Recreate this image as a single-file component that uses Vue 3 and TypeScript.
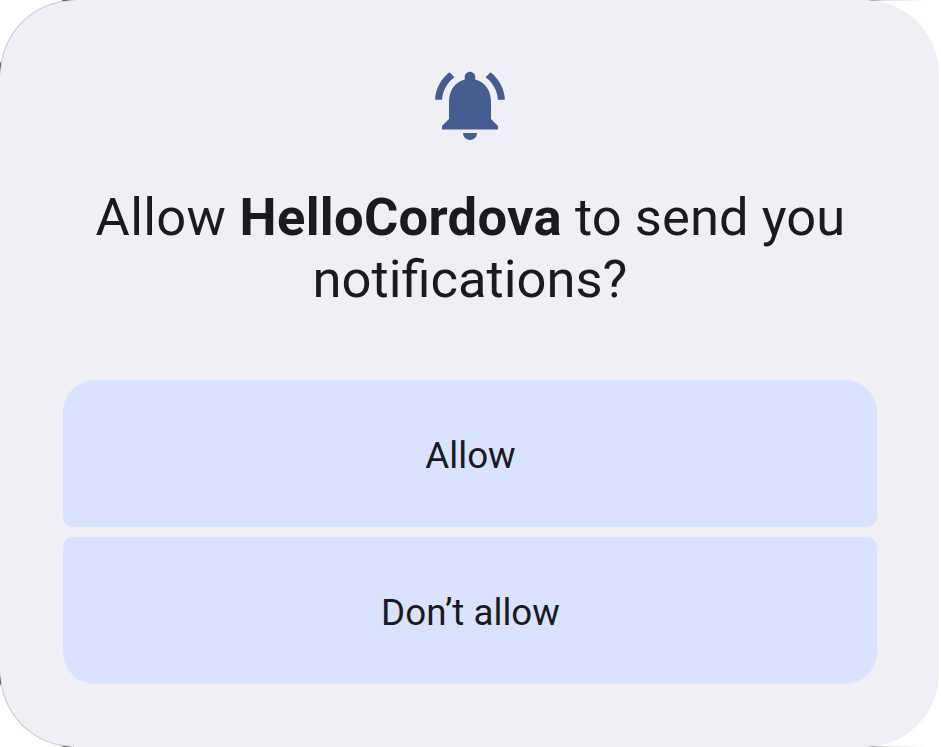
<script setup lang="ts">
interface Choice {
  id: string
  label: string
}

const appName: string = 'HelloCordova'
const choices: Choice[] = [
  { id: 'allow', label: 'Allow' },
  { id: 'deny', label: 'Don’t allow' },
]
</script>

<template>
  <main class="screen">
    <section class="dialog" role="dialog" aria-labelledby="permission-title">
      <svg class="bell" viewBox="0 0 24 24" aria-hidden="true">
        <path d="M7.58 4.08L6.15 2.65C3.75 4.48 2.17 7.3 2.03 10.5h2c.15-2.65 1.51-4.97 3.55-6.42z" />
        <path d="M19.97 10.5h2c-.15-3.2-1.73-6.02-4.12-7.85l-1.42 1.43c2.02 1.45 3.39 3.77 3.54 6.42z" />
        <path d="M18 11c0-3.07-1.64-5.64-4.5-6.32V4c0-.83-.67-1.5-1.5-1.5s-1.5.67-1.5 1.5v.68C7.63 5.36 6 7.92 6 11v5l-2 2v1h16v-1l-2-2z" />
        <path d="M10 20a2 2 0 0 0 4 0z" />
      </svg>
      <h1 id="permission-title" class="title">
        <span class="line spaced">
          <span>Allow&nbsp;</span><strong>{{ appName }}</strong><span class="tail">&nbsp;to send you</span>
        </span>
        <span class="line">notifications?</span>
      </h1>
      <div class="actions">
        <button v-for="choice in choices" :key="choice.id" class="action" type="button">
          {{ choice.label }}
        </button>
      </div>
    </section>
    <i class="fringe fringe-top"></i>
    <i class="fringe fringe-bottom"></i>
    <i class="edge side upper"></i>
    <i class="edge side lower"></i>
    <i class="edge cap top left"></i>
    <i class="edge cap bottom left"></i>
    <i class="edge cap top right"></i>
    <i class="edge cap bottom right"></i>
  </main>
</template>

<style>
body {
  background: #fff;
}
</style>

<style scoped>
.screen {
  position: relative;
  width: 941px;
  height: 747px;
  overflow: hidden;
  background: #fff;
}

.dialog {
  box-sizing: border-box;
  display: flex;
  flex-direction: column;
  align-items: center;
  width: 939px;
  height: 747px;
  padding: 63px 62px 63px 63px;
  border-radius: 74px;
  background: #f0eff6;
  color: #1a1b20;
  font-family: Roboto, sans-serif;
}

.bell {
  flex: none;
  width: 84px;
  height: 84px;
  fill: #475d92;
}

.title {
  width: 814px;
  margin: 39px 0 0;
  font-size: 52.5px;
  font-weight: 400;
  line-height: 62px;
  text-align: center;
}

.line {
  display: flex;
  justify-content: center;
  height: 62px;
}

.spaced {
  padding-left: 1px;
  letter-spacing: 0.3px;
}

.title strong {
  font-weight: 700;
}

.tail {
  letter-spacing: 0.08px;
}

.actions {
  display: flex;
  flex-direction: column;
  gap: 10px;
  width: 814px;
  margin-top: 70px;
}

.action {
  height: 147px;
  margin: 0;
  padding: 4px 0 0 1px;
  border: 0;
  border-radius: 10px;
  background: #d9e2ff;
  color: #1a1b20;
  font-family: inherit;
  font-size: 36.75px;
  font-weight: 400;
  line-height: 43px;
  text-align: center;
}

.action:first-child {
  border-top-left-radius: 32px;
  border-top-right-radius: 32px;
}

.action:last-child {
  border-bottom-right-radius: 32px;
  border-bottom-left-radius: 32px;
}

.fringe {
  position: absolute;
  left: 0;
  box-sizing: border-box;
  width: 74px;
  height: 74px;
  border: 0 solid rgba(0, 0, 0, 0.16);
  border-left-width: 1px;
}

.fringe-top {
  top: 0;
  border-top-width: 1px;
  border-top-left-radius: 74px;
}

.fringe-bottom {
  bottom: 0;
  border-bottom-width: 1px;
  border-bottom-left-radius: 74px;
}

.edge {
  position: absolute;
}

.side {
  left: 0;
  width: 1px;
  height: 12px;
}

.upper {
  top: 61px;
  background: linear-gradient(#fff, #666 20%, #666 35%, #f0eff6);
}

.lower {
  bottom: 61px;
  background: linear-gradient(#f0eff6, #666 65%, #666 80%, #fff);
}

.cap {
  width: 12px;
  height: 1px;
}

.top {
  top: 0;
}

.bottom {
  bottom: 0;
}

.left {
  left: 61px;
  background: linear-gradient(90deg, #fff, #666 20%, #666 35%, #f0eff6);
}

.right {
  left: 867px;
  width: 58px;
  background: linear-gradient(90deg, #f0eff6, #aaa 9%, #ddd 28%, #fff);
}
</style>
